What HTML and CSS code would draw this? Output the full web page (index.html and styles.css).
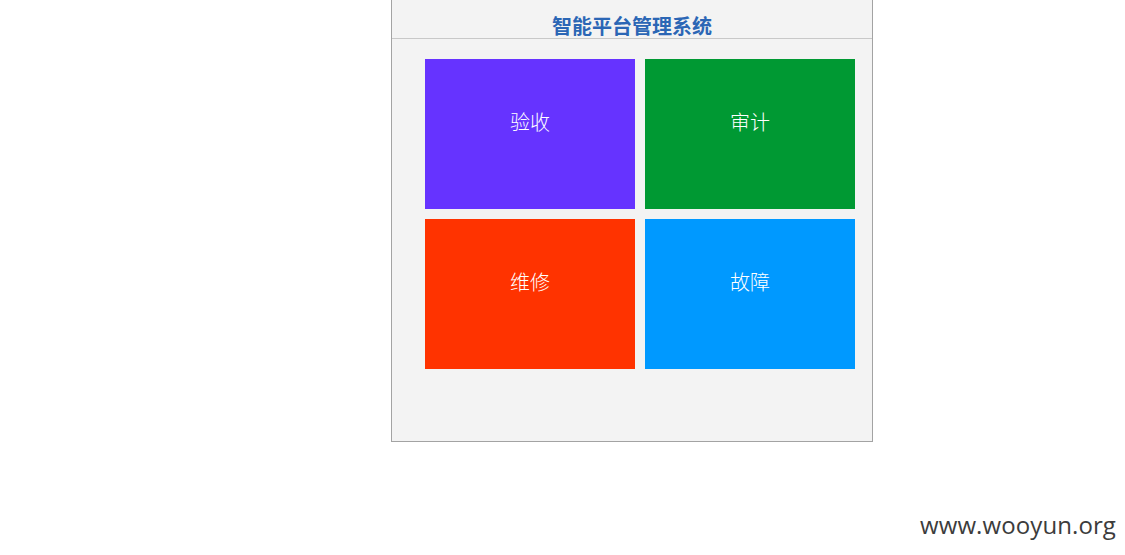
FILE: index.html
```html
<!DOCTYPE html>
<html lang="zh-CN">
<head>
<meta charset="utf-8">
<title>智能平台管理系统</title>
<link rel="stylesheet" href="styles.css">
</head>
<body>
<div class="panel">
  <div class="header">智能平台管理系统</div>
  <div class="tiles">
    <div class="tile t-purple">验收</div>
    <div class="tile t-green">审计</div>
    <div class="tile t-red">维修</div>
    <div class="tile t-blue">故障</div>
  </div>
</div>
<div class="watermark">www.wooyun.org</div>
</body>
</html>
```

FILE: styles.css
```css
html, body {
  margin: 0;
  padding: 0;
  background: #ffffff;
  font-family: "Noto Sans CJK SC", "Noto Sans", sans-serif;
}
.panel {
  margin-left: 391px;
  width: 480px;
  height: 441px;
  border: 1px solid #a3a3a3;
  border-top: none;
  background: #f3f3f3;
}
.header {
  height: 36px;
  padding-top: 2px;
  border-bottom: 1px solid #c8c8c8;
  color: #2b66b5;
  font-weight: bold;
  font-size: 20px;
  line-height: 24px;
  display: flex;
  align-items: flex-end;
  justify-content: center;
}
.tiles {
  display: grid;
  grid-template-columns: 210px 210px;
  grid-auto-rows: 150px;
  gap: 10px;
  padding: 20px 0 0 33px;
}
.tile {
  color: #ffffff;
  font-size: 20px;
  font-weight: 300;
  line-height: 28px;
  text-align: center;
  padding-top: 49px;
  box-sizing: border-box;
}
.t-purple { background: #6633ff; }
.t-green { background: #009933; }
.t-red { background: #ff3300; }
.t-blue { background: #0099ff; }
.watermark {
  position: absolute;
  right: 9px;
  top: 508px;
  font-family: "Open Sans", sans-serif;
  font-size: 24px;
  letter-spacing: 0.1px;
  color: #3c3c3c;
}
```
